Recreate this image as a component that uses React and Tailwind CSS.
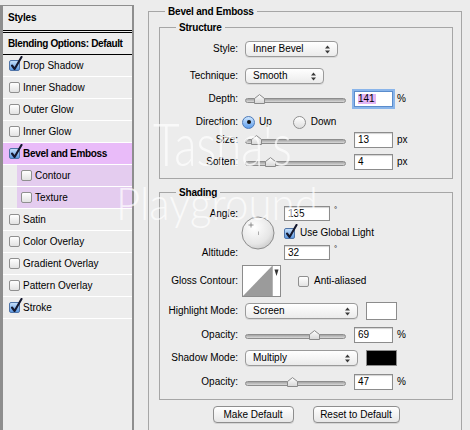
import React from "react";

const STYLES = [
  { label: "Drop Shadow", checked: true },
  { label: "Inner Shadow" },
  { label: "Outer Glow" },
  { label: "Inner Glow" },
  { label: "Bevel and Emboss", checked: true, active: true },
  { label: "Contour", sub: true },
  { label: "Texture", sub: true },
  { label: "Satin" },
  { label: "Color Overlay" },
  { label: "Gradient Overlay" },
  { label: "Pattern Overlay" },
  { label: "Stroke", checked: true },
];

function CheckBox({ checked }) {
  return (
    <span
      className={
        "relative inline-block w-[11px] h-[11px] shrink-0 rounded-[2px] border " +
        (checked
          ? "border-[#4f74a8] bg-gradient-to-b from-[#c4def9] to-[#5c98e0]"
          : "border-[#8f8f8f] bg-gradient-to-b from-white to-[#e2e2e2]")
      }
    >
      {checked && (
        <svg
          width="13"
          height="15"
          viewBox="0 0 13 15"
          className="absolute left-[0px] -top-[5px]"
        >
          <path d="M2 9.5 L4.6 13 L11.5 1" fill="none" stroke="#15182e" strokeWidth="2.1" strokeLinecap="round" strokeLinejoin="round" />
        </svg>
      )}
    </span>
  );
}

function Select({ value, width }) {
  return (
    <div
      className="h-[16px] rounded-[4px] border border-[#9a9a9a] bg-gradient-to-b from-white to-[#ebebeb] shadow-[0_1px_0_rgba(0,0,0,0.08)] flex items-center justify-between pl-[7px] pr-[7px]"
      style={{ width }}
    >
      <span>{value}</span>
      <svg width="5" height="9" viewBox="0 0 5 9">
        <path d="M0 3.5 L2.5 0.5 L5 3.5Z M0 5.5 L2.5 8.5 L5 5.5Z" fill="#3a3a3a" />
      </svg>
    </div>
  );
}

function Slider({ thumb }) {
  return (
    <div className="relative w-[101px] h-[10px] shrink-0">
      <div className="absolute left-0 right-0 top-[4px] h-[5px] rounded-full border border-[#8d8d8d] bg-gradient-to-b from-[#a3a3a3] to-[#dadada]" />
      <svg width="11" height="10" viewBox="0 0 11 10" className="absolute top-0" style={{ left: thumb - 5.5 }}>
        <defs>
          <linearGradient id="thumbg" x1="0" y1="0" x2="0" y2="1">
            <stop offset="0" stopColor="#ffffff" />
            <stop offset="1" stopColor="#d6d6d6" />
          </linearGradient>
        </defs>
        <path d="M0.5 9.5 L0.5 4.5 L5.5 0.6 L10.5 4.5 L10.5 9.5Z" fill="url(#thumbg)" stroke="#8a8a8a" />
      </svg>
    </div>
  );
}

function NumberBox({ value, w = 39, h = 16, focus }) {
  return (
    <div
      className={
        "bg-white border flex items-center pl-[3px] shrink-0 " +
        (focus
          ? "border-[#5a8ccc] shadow-[0_0_0_2px_#8ab5ea]"
          : "border-[#8c8c8c] shadow-[inset_0_1px_1px_rgba(0,0,0,0.18)]")
      }
      style={{ width: w, height: h }}
    >
      {focus ? <span className="bg-[#e2b5f6] pr-[1px]">{value}</span> : value}
    </div>
  );
}

function Radio({ checked }) {
  return (
    <span
      className={
        "w-[13px] h-[13px] rounded-full border flex items-center justify-center shrink-0 " +
        (checked
          ? "border-[#4c79b8] bg-gradient-to-b from-[#cfe6fd] to-[#5d9deb]"
          : "border-[#8f8f8f] bg-gradient-to-b from-white to-[#dedede]")
      }
    >
      {checked && <span className="w-[4px] h-[4px] rounded-full bg-[#111]" />}
    </span>
  );
}

function Label({ children }) {
  return <div className="w-[78px] shrink-0 text-right">{children}</div>;
}

function SliderRow({ label, thumb, value, unit, mt }) {
  return (
    <div className={"flex items-center h-[16px] " + mt}>
      <Label>{label}</Label>
      <div className="ml-[7px]">
        <Slider thumb={thumb} />
      </div>
      <div className="ml-[8px]">
        <NumberBox value={value} />
      </div>
      <span className="ml-[4px]">{unit}</span>
    </div>
  );
}

function Box({ title, className = "", children }) {
  return (
    <div className={"relative border border-[#a6a6a6] " + className}>
      <span className="absolute -top-[7px] left-[16px] px-[3px] bg-[#ececec] font-bold leading-[13px] tracking-[-0.2px]">
        {title}
      </span>
      {children}
    </div>
  );
}

function Button({ children, w }) {
  return (
    <div
      className="h-[17px] rounded-[4px] border border-[#8e8e8e] bg-gradient-to-b from-white to-[#e6e6e6] shadow-[0_1px_0_rgba(0,0,0,0.1)] flex items-center justify-center"
      style={{ width: w }}
    >
      {children}
    </div>
  );
}

export default function App() {
  return (
    <div className="relative w-[470px] h-[430px] overflow-hidden bg-[#ececec] text-black text-[10px] leading-none font-['Liberation_Sans',Arial,sans-serif] flex">
      {/* styles list */}
      <div className="mt-[5px] w-[134px] h-[440px] shrink-0 border-l-[3px] border-t border-r-2 border-[#8e8e8e] bg-[#ededed]">
        <div className="h-[27px] border-b-[3px] border-double border-black flex items-center pl-[5px] font-bold tracking-[-0.2px]">
          Styles
        </div>
        <div className="h-[22px] border-b border-black flex items-center pl-[5px] font-bold tracking-[-0.35px]">
          Blending Options: Default
        </div>
        {STYLES.map((s) => (
          <div key={s.label} className="h-[22px] border-b border-white flex">
            <div
              className={
                "flex-1 flex items-center gap-[3px] " +
                (s.sub ? "ml-[14px] pl-[4px] bg-[#e4ccef]" : "pl-[6px]") +
                (s.active ? " bg-[#e9bbf9] font-bold tracking-[-0.3px]" : "")
              }
            >
              <CheckBox checked={s.checked} />
              <span>{s.label}</span>
            </div>
          </div>
        ))}
      </div>

      {/* settings */}
      <div className="ml-[14px] mt-[11px]">
        <Box title="Bevel and Emboss" className="w-[314px] h-[440px] pl-[10px] pt-[15px]">
          <Box title="Structure" className="w-[294px] pt-[13px] pb-[8px]">
            <div className="flex items-center h-[16px]">
              <Label>Style:</Label>
              <div className="ml-[7px]">
                <Select value="Inner Bevel" width={93} />
              </div>
            </div>
            <div className="flex items-center h-[16px] mt-[11px]">
              <Label>Technique:</Label>
              <div className="ml-[7px]">
                <Select value="Smooth" width={79} />
              </div>
            </div>
            <div className="flex items-center h-[16px] mt-[7px]">
              <Label>Depth:</Label>
              <div className="ml-[7px]">
                <Slider thumb={14} />
              </div>
              <div className="ml-[8px]">
                <NumberBox value="141" focus />
              </div>
              <span className="ml-[4px]">%</span>
            </div>
            <div className="flex items-center h-[16px] mt-[7px]">
              <Label>Direction:</Label>
              <div className="ml-[4px] flex items-center">
                <Radio checked />
                <span className="ml-[4px]">Up</span>
                <span className="ml-[21px]">
                  <Radio />
                </span>
                <span className="ml-[5px]">Down</span>
              </div>
            </div>
            <SliderRow label="Size:" thumb={11} value="13" unit="px" mt="mt-[2px]" />
            <SliderRow label="Soften:" thumb={25} value="4" unit="px" mt="mt-[6px]" />
          </Box>

          <Box title="Shading" className="w-[294px] mt-[13px] pt-[13px] pb-[9px]">
            <div className="grid grid-cols-[78px_46px_auto] grid-rows-[15px_12px_15px] gap-y-[6px]">
              <div className="col-start-1 row-start-1 flex items-center justify-end">Angle:</div>
              <div className="col-start-2 row-start-1 row-span-3 self-center ml-[3px]">
                <svg width="34" height="34" viewBox="0 0 34 34">
                  <defs>
                    <radialGradient id="dial" cx="0.38" cy="0.32" r="0.75">
                      <stop offset="0" stopColor="#ffffff" />
                      <stop offset="0.7" stopColor="#e6e6e6" />
                      <stop offset="1" stopColor="#c8c8c8" />
                    </radialGradient>
                  </defs>
                  <circle cx="17" cy="17" r="16" fill="url(#dial)" stroke="#8d8d8d" />
                  <path d="M10 6.5 V11.5 M7.5 9 H12.5" stroke="#777" strokeWidth="0.8" />
                  <path d="M17.5 15.5 V19" stroke="#999" strokeWidth="0.8" />
                </svg>
              </div>
              <div className="col-start-3 row-start-1 flex items-start">
                <NumberBox value="135" w={46} h={15} />
                <span className="ml-[4px] text-[8px]">°</span>
              </div>
              <div className="col-start-3 row-start-2 flex items-center gap-[5px]">
                <CheckBox checked />
                <span>Use Global Light</span>
              </div>
              <div className="col-start-1 row-start-3 flex items-center justify-end">Altitude:</div>
              <div className="col-start-3 row-start-3 flex items-start">
                <NumberBox value="32" w={46} h={15} />
                <span className="ml-[4px] text-[8px]">°</span>
              </div>
            </div>

            <div className="flex items-center h-[32px] mt-[5px]">
              <Label>Gloss Contour:</Label>
              <div className="ml-[4px] w-[39px] h-[32px] border border-[#8c8c8c] bg-white flex">
                <svg width="29" height="30" viewBox="0 0 29 30" className="shrink-0">
                  <polygon points="0,30 29,0 29,30" fill="#9b9b9b" />
                </svg>
                <div className="flex-1 border-l border-[#b5b5b5] flex justify-center pt-[3px]">
                  <svg width="5" height="8" viewBox="0 0 5 8">
                    <path d="M0.5 0.5 H4.5 L2.5 7Z" fill="#333" />
                  </svg>
                </div>
              </div>
              <div className="ml-[17px] flex items-center gap-[5px]">
                <CheckBox />
                <span>Anti-aliased</span>
              </div>
            </div>

            <div className="flex items-center h-[16px] mt-[6px]">
              <Label>Highlight Mode:</Label>
              <div className="ml-[7px]">
                <Select value="Screen" width={113} />
              </div>
              <div className="ml-[8px] w-[31px] h-[18px] border border-[#8c8c8c] bg-white" />
            </div>
            <SliderRow label="Opacity:" thumb={69} value="69" unit="%" mt="mt-[8px]" />
            <div className="flex items-center h-[16px] mt-[7px]">
              <Label>Shadow Mode:</Label>
              <div className="ml-[7px]">
                <Select value="Multiply" width={113} />
              </div>
              <div className="ml-[8px] w-[31px] h-[16px] border border-[#8c8c8c] bg-black" />
            </div>
            <SliderRow label="Opacity:" thumb={47} value="47" unit="%" mt="mt-[8px]" />
          </Box>

          <div className="mt-[6px] w-[294px] flex justify-center gap-[19px]">
            <Button w={81}>Make Default</Button>
            <Button w={87}>Reset to Default</Button>
          </div>
        </Box>
      </div>

      {/* watermark */}
      <div className="pointer-events-none absolute left-[153px] top-[114px] text-[46px] leading-none font-['Lato',sans-serif] font-light text-white/70 scale-y-[1.3] origin-top">
        Tasha's
      </div>
      <div className="pointer-events-none absolute left-[116px] top-[179px] text-[42px] leading-none font-['Lato',sans-serif] font-light text-white/70 scale-y-[1.1] origin-top">
        Playground
      </div>
    </div>
  );
}
